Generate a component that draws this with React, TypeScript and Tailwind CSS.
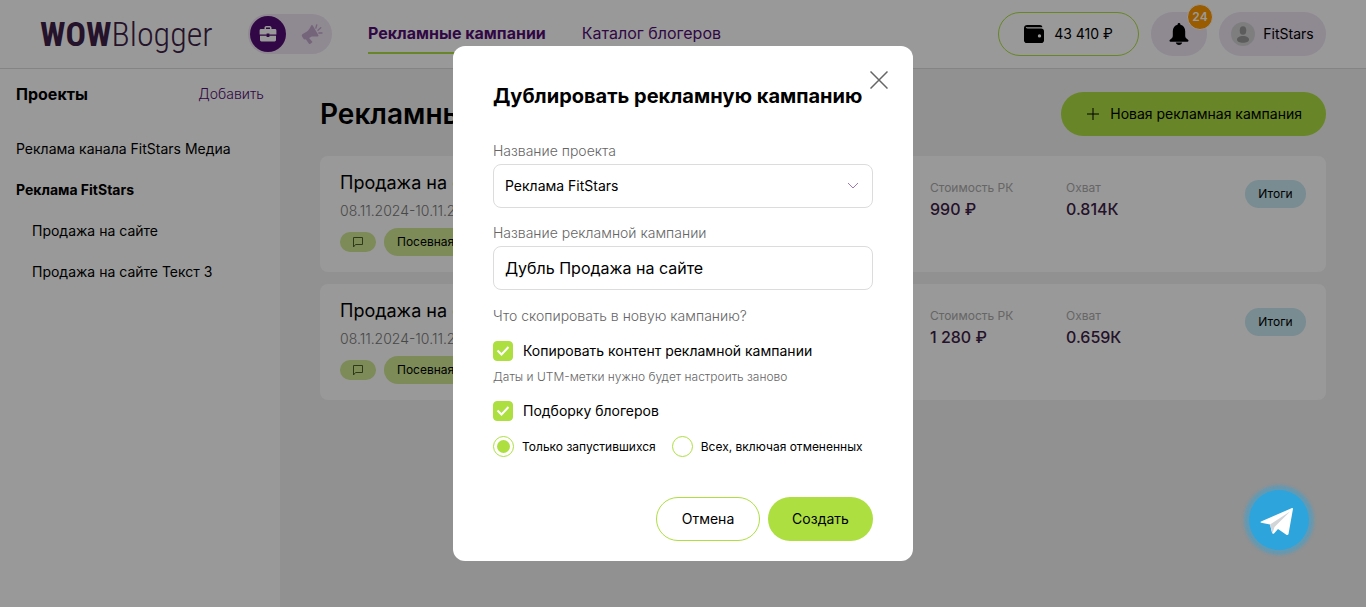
import { useState } from 'react';

const campaigns = [
  { id: 1, title: 'Продажа на сайте', dates: '08.11.2024-10.11.2024', kind: 'Посевная', price: '990 ₽', reach: '0.814К' },
  { id: 2, title: 'Продажа на сайте Текст 3', dates: '08.11.2024-10.11.2024', kind: 'Посевная', price: '1 280 ₽', reach: '0.659К' },
];

function Logo() {
  return (
    <span className="flex items-baseline font-['Liberation_Sans_Narrow','Roboto_Condensed',Roboto,sans-serif] text-[34px] leading-10 text-[#3c2146]">
      <span className="font-bold">WOW</span>
      <span className="font-light">Blogger</span>
    </span>
  );
}

function BriefcaseIcon() {
  return (
    <svg aria-hidden="true" className="h-4 w-[18px]" viewBox="0 0 18 16" fill="#fff">
      <path fillRule="evenodd" d="M5.5 3V1.8C5.5.8 6.300 0 7.300 0h3.400c1 0 1.800.8 1.800 1.800V3H16c.8 0 1.400.6 1.400 1.400V8.500h-7V7.500H7.600v1H.6V4.400C.6 3.600 1.200 3 2 3zm1.500 0h4V1.800c0-.2-.1-.3-.3-.3H7.300c-.2 0-.3.1-.3.3z" />
      <path d="M1 9.700h6.600v1.300h2.800V9.700H17v4.300c0 .8-.6 1.400-1.400 1.400H2.400C1.600 15.400 1 14.800 1 14z" />
    </svg>
  );
}

function MegaphoneIcon() {
  return (
    <svg aria-hidden="true" className="h-[22px] w-[22px]" viewBox="0 0 22 22" fill="#c2a9cd">
      <path d="M11.800 2.600 17.300 12c.4.8 0 1.400-.8 1.400l-5.600.2-2.800 1.500 3 3.400c.3.4.3.8-.1 1.100l-1.600 1.200c-.6.4-1.200.3-1.600-.3l-3-4.200c-1 .4-1.900.2-2.500-.7l-1.200-2.100c-.5-1-.3-1.900.6-2.500l3.800-2.200c2-1.300 3.300-3.400 4.500-6.100.4-.9 1.300-.9 1.800-.1z" />
      <path d="m14.800 5.200 1-3.400M17 7.200l2.800-2.500M17.800 10h3.200" stroke="#c2a9cd" strokeWidth="1.300" strokeLinecap="round" />
    </svg>
  );
}

function WalletIcon() {
  return (
    <svg aria-hidden="true" className="h-5 w-5" viewBox="0 0 20 20" fill="#000">
      <path
        fillRule="evenodd"
        d="M3.200 1h12.600c1.400 0 2.400.9 2.600 2.200h-15c-1 0-1.500-.3-1.500-.8v1.200c0 .5.500.8 1.400.8h14c1.500 0 2.700 1 2.700 2.600v9.400c0 1.500-1.200 2.600-2.600 2.600H2.600C1.200 19 0 17.900 0 16.400V4c0-1.700 1.400-3 3.200-3zm12.300 9.200a1.700 1.700 0 1 0 0 3.400 1.700 1.700 0 0 0 0-3.400z"
      />
    </svg>
  );
}

function BellIcon() {
  return (
    <svg aria-hidden="true" className="h-6 w-6" viewBox="0 0 24 24" fill="#000">
      <path d="M12 1c.8 0 1.400.6 1.400 1.300v.5c3 .7 4.800 3.200 4.800 6.500v4.500c0 1.600 1 2.800 2.800 4 .9.700.5 1.900-.6 1.900H3.600c-1.100 0-1.500-1.200-.6-1.900 1.800-1.200 2.800-2.400 2.800-4V9.300c0-3.300 1.800-5.800 4.800-6.500v-.5C10.600 1.600 11.200 1 12 1z" />
      <path d="M8.800 20.500h6.400c-.3 1.500-1.600 2.500-3.200 2.500s-2.900-1-3.200-2.500z" />
    </svg>
  );
}

function AvatarIcon() {
  return (
    <svg aria-hidden="true" className="h-6 w-6" viewBox="0 0 24 24">
      <circle cx="12" cy="12" r="12" fill="#d3d3d3" />
      <ellipse cx="12" cy="8.500" rx="3.300" ry="4.300" fill="#999" />
      <path d="M6 17.500c0-2.400 2.600-3.600 6-3.600s6 1.200 6 3.600-2.600 3.200-6 3.200-6-.8-6-3.200z" fill="#999" />
    </svg>
  );
}

function PlusIcon() {
  return (
    <svg aria-hidden="true" className="h-3 w-3" viewBox="0 0 12 12" stroke="#000">
      <path d="M6 0v12M0 6h12" />
    </svg>
  );
}

function CommentIcon() {
  return (
    <svg aria-hidden="true" className="h-3 w-3" viewBox="0 0 12 12" fill="none" stroke="#4f5f2c">
      <path d="M1.500 1.500h9v7h-7l-2 2.500z" strokeLinejoin="round" />
    </svg>
  );
}

function TelegramIcon() {
  return (
    <svg aria-hidden="true" className="h-[60px] w-[60px]" viewBox="0 0 60 60">
      <path d="M12 31.500 43 18c.6-.2 1 .1 1 .7L39.500 44c-.2 1-1 1.400-1.800.9L29 39l-4 4.500c-.6.6-1.800.3-2-.7l-2-8.300-8.800-1.800c-.8-.2-.9-.9-.2-1.200z" fill="#fff" />
      <path d="M21 34.500 41 21.500 25.500 37 23.500 43.500z" fill="#d2d5d7" />
    </svg>
  );
}

function Header() {
  return (
    <header className="flex h-[69px] items-center border-b border-[#dcdcdc] bg-white px-10">
      <a href="#" className="w-[170px] shrink-0">
        <Logo />
      </a>
      <div className="ml-[38px] flex h-10 w-[84px] shrink-0 items-center gap-2 rounded-full bg-[#efe5f3] px-[2px]">
        <button type="button" aria-label="Рекламодатель" className="flex h-9 w-9 items-center justify-center rounded-full bg-[#530d74]">
          <BriefcaseIcon />
        </button>
        <button type="button" aria-label="Блогер" className="flex h-9 w-9 items-center justify-center">
          <MegaphoneIcon />
        </button>
      </div>
      <nav className="ml-9 flex gap-9 text-base leading-6 text-[#530d74]">
        <a href="#" className="border-b-2 border-[#addf41] pt-[7px] pb-[7px] font-bold">
          Рекламные кампании
        </a>
        <a href="#" className="border-b-2 border-transparent pt-[7px] pb-[7px]">
          Каталог блогеров
        </a>
      </nav>
      <div className="ml-auto flex shrink-0 items-center gap-3 text-sm">
        <button type="button" className="flex h-11 w-[141px] items-center justify-center gap-[10px] rounded-full border border-[#addf41]">
          <WalletIcon />
          43 410 ₽
        </button>
        <button type="button" aria-label="Уведомления" className="relative flex h-11 w-14 items-center justify-center rounded-full bg-[#efe5f3]">
          <BellIcon />
          <span className="absolute -top-2 -right-[6px] flex h-[26px] w-[26px] items-center justify-center rounded-full border border-white bg-[#ff9900] text-xs font-semibold text-white">
            24
          </span>
        </button>
        <button type="button" className="flex h-11 w-[107px] items-center justify-center gap-2 rounded-full bg-[#efe5f3]">
          <AvatarIcon />
          FitStars
        </button>
      </div>
    </header>
  );
}

function Sidebar() {
  return (
    <aside className="w-[280px] shrink-0 bg-white px-4 pt-[13px] text-sm">
      <div className="flex items-center justify-between">
        <h2 className="text-base leading-6 font-bold">Проекты</h2>
        <button type="button" className="font-light text-[#530d74]">
          Добавить
        </button>
      </div>
      <ul className="mt-[33px] flex flex-col gap-[21px]">
        <li>
          <a href="#">Реклама канала FitStars Медиа</a>
        </li>
        <li>
          <a href="#" className="font-bold">
            Реклама FitStars
          </a>
        </li>
        <li className="pl-4">
          <a href="#">Продажа на сайте</a>
        </li>
        <li className="pl-4">
          <a href="#">Продажа на сайте Текст 3</a>
        </li>
      </ul>
    </aside>
  );
}

function CampaignCard({ campaign }: { campaign: (typeof campaigns)[number] }) {
  return (
    <article className="flex rounded-lg bg-white px-5 pt-[14px] pb-4">
      <div className="flex-1">
        <h2 className="text-lg leading-[26px]">{campaign.title}</h2>
        <p className="mt-1 text-sm leading-[22px] font-light text-[#777]">{campaign.dates}</p>
        <div className="mt-[6px] flex items-center gap-2 text-xs">
          <span className="flex h-5 w-9 items-center justify-center rounded-full bg-[#cfe893]">
            <CommentIcon />
          </span>
          <span className="flex h-7 items-center rounded-full bg-[#cfe893] px-[13px]">{campaign.kind}</span>
        </div>
      </div>
      <dl className="flex w-[315px] shrink-0 pt-[10px]">
        <div className="w-[136px]">
          <dt className="text-xs leading-4 text-[#aaa]">Стоимость РК</dt>
          <dd className="mt-px text-base font-medium text-[#3c2146]">{campaign.price}</dd>
        </div>
        <div>
          <dt className="text-xs leading-4 text-[#aaa]">Охват</dt>
          <dd className="mt-px text-base font-medium text-[#3c2146]">{campaign.reach}</dd>
        </div>
      </dl>
      <button type="button" className="mt-[10px] h-7 w-[61px] shrink-0 rounded-full bg-[#c8e9f2] text-xs">
        Итоги
      </button>
    </article>
  );
}

function CheckRow({ label, checked, onChange }: { label: string; checked: boolean; onChange: (value: boolean) => void }) {
  return (
    <label className="flex items-center gap-[10px] text-sm leading-5">
      <span className="grid h-5 w-5">
        <input
          type="checkbox"
          checked={checked}
          onChange={(event) => onChange(event.target.checked)}
          className="peer col-start-1 row-start-1 h-5 w-5 appearance-none rounded border border-[#addf41] checked:bg-[#addf41]"
        />
        <svg aria-hidden="true" className="pointer-events-none invisible col-start-1 row-start-1 h-5 w-5 peer-checked:visible" viewBox="0 0 20 20" fill="none">
          <path d="m4.500 9.500 4 4 7-7.500" stroke="#fff" strokeWidth="2" />
        </svg>
      </span>
      {label}
    </label>
  );
}

function RadioOption({ label, checked, onChange }: { label: string; checked: boolean; onChange: () => void }) {
  return (
    <label className="flex items-center gap-2 text-xs leading-5 whitespace-nowrap">
      <input
        type="radio"
        name="bloggers"
        checked={checked}
        onChange={onChange}
        className="h-[21px] w-[21px] appearance-none rounded-full border border-[#addf41] bg-clip-content p-[3px] checked:bg-[#addf41]"
      />
      {label}
    </label>
  );
}

function DuplicateDialog() {
  const [name, setName] = useState('Дубль Продажа на сайте');
  const [copyContent, setCopyContent] = useState(true);
  const [copyBloggers, setCopyBloggers] = useState(true);
  const [scope, setScope] = useState('launched');

  return (
    <form role="dialog" aria-labelledby="dialog-title" className="relative w-[460px] rounded-xl bg-white px-10 pt-9 pb-5">
      <button type="button" aria-label="Закрыть" className="absolute top-[25px] right-[25px]">
        <svg aria-hidden="true" className="h-[18px] w-[18px]" viewBox="0 0 18 18" stroke="#666" strokeWidth="1.500">
          <path d="m.5.5 17 17M17.5.5l-17 17" />
        </svg>
      </button>
      <h1 id="dialog-title" className="text-xl leading-7 font-bold whitespace-nowrap">
        Дублировать рекламную кампанию
      </h1>

      <label htmlFor="project" className="mt-[31px] block text-sm leading-5 font-light text-[#666]">
        Название проекта
      </label>
      <div className="mt-[3px] grid items-center">
        <select id="project" className="col-start-1 row-start-1 h-11 w-full appearance-none rounded-lg border border-[#dcdcdc] bg-white px-[11px] text-sm">
          <option>Реклама FitStars</option>
          <option>Реклама канала FitStars Медиа</option>
        </select>
        <svg aria-hidden="true" className="pointer-events-none col-start-1 row-start-1 mr-[14px] h-3 w-3 justify-self-end" viewBox="0 0 12 12" fill="none">
          <path d="m1 3 5 5 5-5" stroke="#a077b5" />
        </svg>
      </div>

      <label htmlFor="campaign" className="mt-[15px] block text-sm leading-5 font-light text-[#666]">
        Название рекламной кампании
      </label>
      <input
        id="campaign"
        type="text"
        value={name}
        onChange={(event) => setName(event.target.value)}
        className="mt-[3px] block h-11 w-full rounded-lg border border-[#dcdcdc] px-[11px] text-base"
      />

      <fieldset>
        <legend className="pt-4 text-sm leading-5 font-light text-[#666]">Что скопировать в новую кампанию?</legend>
        <div className="mt-[15px]">
          <CheckRow label="Копировать контент рекламной кампании" checked={copyContent} onChange={setCopyContent} />
        </div>
        <p className="mt-[6px] text-xs leading-5 font-light text-[#666]">Даты и UTM-метки нужно будет настроить заново</p>
        <div className="mt-[14px]">
          <CheckRow label="Подборку блогеров" checked={copyBloggers} onChange={setCopyBloggers} />
        </div>
        <div className="mt-[15px] flex gap-4">
          <RadioOption label="Только запустившихся" checked={scope === 'launched'} onChange={() => setScope('launched')} />
          <RadioOption label="Всех, включая отмененных" checked={scope === 'all'} onChange={() => setScope('all')} />
        </div>
      </fieldset>

      <div className="mt-10 flex justify-end gap-2 text-sm">
        <button type="button" className="h-11 w-[104px] rounded-full border border-[#addf41]">
          Отмена
        </button>
        <button type="submit" className="h-11 w-[105px] rounded-full bg-[#addf41]">
          Создать
        </button>
      </div>
    </form>
  );
}

export default function App() {
  return (
    <div className="flex min-h-screen flex-col bg-[#f2f2f2] font-[Inter,sans-serif] text-black">
      <Header />
      <div className="flex flex-1">
        <Sidebar />
        <main className="flex-1 px-10 pt-[23px]">
          <div className="flex items-center justify-between">
            <h1 className="text-[28px] leading-9 font-semibold">Рекламные кампании</h1>
            <button type="button" className="flex h-11 items-center gap-[11px] rounded-full bg-[#addf41] pr-6 pl-[26px] text-sm">
              <PlusIcon />
              Новая рекламная кампания
            </button>
          </div>
          <div className="mt-5 flex flex-col gap-3">
            {campaigns.map((campaign) => (
              <CampaignCard key={campaign.id} campaign={campaign} />
            ))}
          </div>
        </main>
      </div>
      <div className="fixed inset-0 flex items-center justify-center bg-black/40">
        <DuplicateDialog />
      </div>
      <a
        href="#"
        aria-label="Telegram"
        className="fixed right-[57px] bottom-[57px] rounded-full bg-[#2da5dc] shadow-[0_0_3px_5px_rgba(45,165,220,0.45)]"
      >
        <TelegramIcon />
      </a>
    </div>
  );
}
